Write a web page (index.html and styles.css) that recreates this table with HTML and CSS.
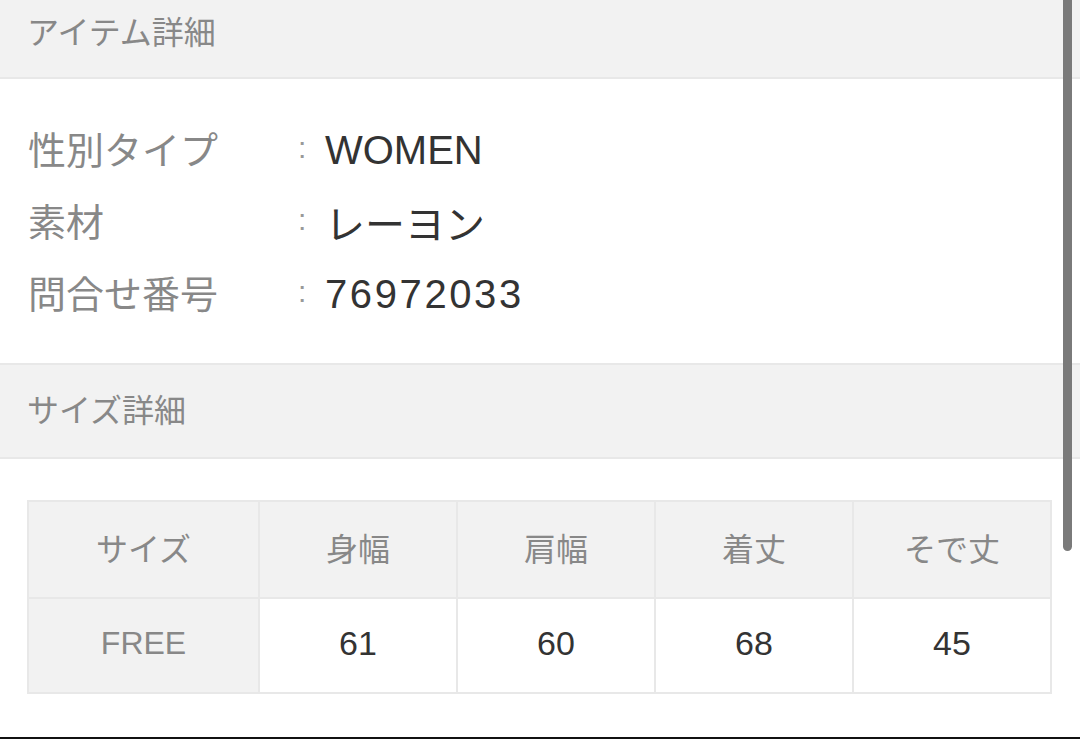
FILE: index.html
```html
<!DOCTYPE html>
<html lang="ja">
<head>
<meta charset="utf-8">
<link rel="stylesheet" href="styles.css">
</head>
<body>
<div class="page">
  <div class="sec-head first">アイテム詳細</div>
  <div class="info">
    <div class="row"><span class="label">性別タイプ</span><span class="colon">:</span><span class="value">WOMEN</span></div>
    <div class="row"><span class="label">素材</span><span class="colon">:</span><span class="value">レーヨン</span></div>
    <div class="row"><span class="label">問合せ番号</span><span class="colon">:</span><span class="value num">76972033</span></div>
  </div>
  <div class="sec-head second">サイズ詳細</div>
  <div class="size-wrap">
    <table class="size">
      <tr class="hrow"><th class="c1">サイズ</th><th>身幅</th><th>肩幅</th><th>着丈</th><th>そで丈</th></tr>
      <tr class="brow"><td class="c1">FREE</td><td>61</td><td>60</td><td>68</td><td>45</td></tr>
    </table>
  </div>
  <div class="bottom-line"></div>
  <div class="scrollbar"></div>
</div>
</body>
</html>
```

FILE: styles.css
```css
html, body {
  margin: 0;
  padding: 0;
  background: #fff;
}
body {
  font-family: "Liberation Sans", "Noto Sans CJK JP", sans-serif;
  width: 1080px;
  height: 739px;
  overflow: hidden;
}
.page {
  position: relative;
  width: 1080px;
  height: 739px;
  display: flex;
  flex-direction: column;
}
.sec-head {
  background: #f2f2f2;
  color: #888;
  font-size: 32px;
  padding-left: 27px;
  display: flex;
  align-items: center;
  border-top: 2px solid #e8e8e8;
  border-bottom: 2px solid #e8e8e8;
  box-sizing: border-box;
  flex: none;
}
.sec-head.first {
  border-top: none;
  height: 79px;
  padding-bottom: 18px;
}
.sec-head.second {
  height: 96px;
  padding-bottom: 6px;
}
.info {
  padding: 35px 0 33px 28px;
}
.row {
  display: flex;
  align-items: center;
  height: 72px;
}
.label {
  width: 270px;
  color: #888;
  font-size: 38px;
  padding-bottom: 5px;
}
.colon {
  color: #999;
  font-size: 30px;
  width: 27px;
  position: relative;
  top: -2px;
}
.value {
  color: #333;
  font-size: 40px;
}
.value.num {
  letter-spacing: 2.6px;
}
.size-wrap {
  padding: 41px 0 0 27px;
}
.size {
  border-collapse: collapse;
  width: 1025px;
  table-layout: fixed;
}
.size th, .size td {
  border: 2px solid #e8e8e8;
  text-align: center;
  padding: 0;
  font-weight: normal;
}
.size th {
  background: #f2f2f2;
  color: #888;
  font-size: 32px;
  height: 89px;
  padding-bottom: 6px;
}
.size td {
  color: #333;
  font-size: 34px;
  height: 89px;
  padding-bottom: 4px;
}
.size td.c1 {
  background: #f2f2f2;
  color: #888;
  font-size: 32px;
}
.size .c1 {
  width: 229px;
}
.bottom-line {
  position: absolute;
  left: 0;
  right: 0;
  bottom: 0;
  height: 2px;
  background: #111;
}
.scrollbar {
  position: absolute;
  left: 1063px;
  top: -10px;
  width: 9px;
  height: 561px;
  border-radius: 5px;
  background: #7a7a7a;
}
```
